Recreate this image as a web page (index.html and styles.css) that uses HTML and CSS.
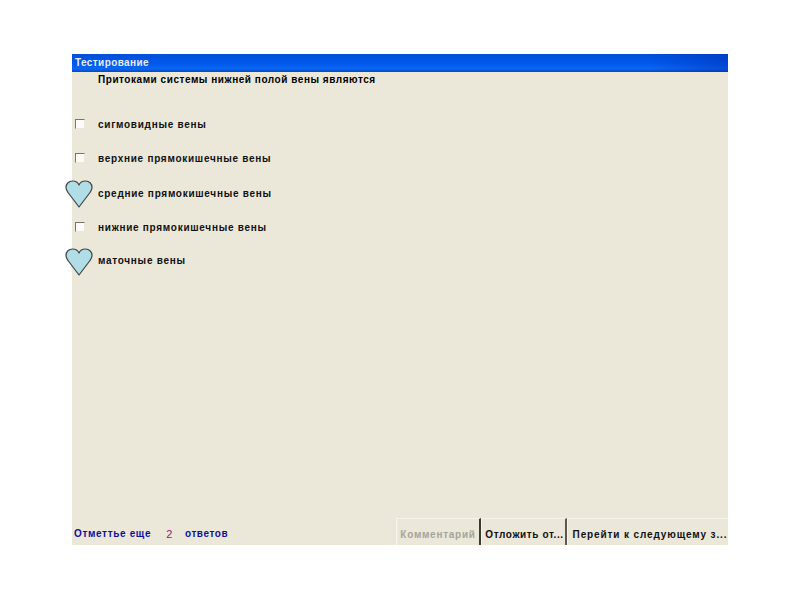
FILE: index.html
```html
<!DOCTYPE html>
<html lang="ru">
<head>
<meta charset="utf-8">
<title>Тестирование</title>
<link rel="stylesheet" href="styles.css">
</head>
<body>
<main class="window">
  <header class="titlebar">Тестирование</header>
  <div class="content">
    <p class="question">Притоками системы нижней полой вены являются</p>
    <ul class="options">
      <li class="option"><span class="check"></span><span>сигмовидные вены</span></li>
      <li class="option"><span class="check"></span><span>верхние прямокишечные вены</span></li>
      <li class="option option-marked option-down">
        <svg class="heart" viewBox="0 0 28 28"><path d="M14 27L4.500 14.500C2.500 12 1 10 1 7.500 1 3.500 4 1 7.500 1 10.500 1 13 2.500 14 5 15 2.500 17.500 1 20.500 1 24 1 27 3.500 27 7.500 27 10 25.500 12 23.500 14.500Z"/></svg>
        <span class="check-space"></span><span>средние прямокишечные вены</span>
      </li>
      <li class="option"><span class="check"></span><span>нижние прямокишечные вены</span></li>
      <li class="option option-marked option-up">
        <svg class="heart" viewBox="0 0 28 28"><path d="M14 27L4.500 14.500C2.500 12 1 10 1 7.500 1 3.500 4 1 7.500 1 10.500 1 13 2.500 14 5 15 2.500 17.500 1 20.500 1 24 1 27 3.500 27 7.500 27 10 25.500 12 23.500 14.500Z"/></svg>
        <span class="check-space"></span><span>маточные вены</span>
      </li>
    </ul>
  </div>
  <footer class="statusbar">
    <div class="status"><span class="status-lead">Отметтье еще</span><span class="count">2</span><span class="status-tail">ответов</span></div>
    <div class="buttons">
      <button class="btn btn-comment" disabled>Комментарий</button>
      <button class="btn btn-defer">Отложить от...</button>
      <button class="btn btn-next">Перейти к следующему з...</button>
    </div>
  </footer>
</main>
</body>
</html>
```
FILE: styles.css
```css
* { box-sizing: border-box; }
html, body { height: 100%; }
body {
  margin: 0;
  background: #fff;
  padding: 54px 72px;
  font-family: "Liberation Sans", Arial, sans-serif;
  font-size: 10px;
  font-weight: 700;
  letter-spacing: 0.72px;
  color: #111;
}
.window {
  width: 656px;
  height: 491px;
  background: #ebe8da;
  display: flex;
  flex-direction: column;
}
.titlebar {
  height: 18px;
  flex: none;
  padding-left: 3px;
  line-height: 17px;
  color: #e8eeff;
  letter-spacing: 0.4px;
  background:
    linear-gradient(90deg, rgba(0, 30, 160, 0) 88%, rgba(0, 30, 160, 0.35) 100%),
    linear-gradient(180deg, #0050d8 0%, #0058ea 50%, #0a66f4 82%, #0848b8 100%);
}
.content { flex: 1; }
.question {
  margin: 0;
  padding-left: 26px;
  height: 16px;
  line-height: 16px;
  letter-spacing: 0.54px;
  color: #000;
}
.options {
  list-style: none;
  margin: 19px 0 0;
  padding: 0;
}
.option {
  position: relative;
  height: 34px;
  display: flex;
  align-items: center;
  padding-left: 3px;
  gap: 13px;
  color: #111;
}
.option-down { margin-top: 1px; }
.option-up { margin-top: -1px; }
.check {
  width: 10px;
  height: 10px;
  flex: none;
  background: #fbfbf8;
  border-top: 1px solid #77776d;
  border-left: 1px solid #77776d;
  border-right: 1px solid #ebe8da;
  border-bottom: 1px solid #ebe8da;
}
.check-space { width: 10px; flex: none; }
.heart {
  position: absolute;
  left: -7px;
  top: 5px;
  width: 28px;
  height: 28px;
  fill: #b0dde6;
  stroke: #3c4648;
  stroke-width: 1.2;
  stroke-linejoin: round;
}
.option-down .heart { top: 4px; }
.statusbar {
  height: 27px;
  padding-top: 4px;
  flex: none;
  display: flex;
  justify-content: space-between;
  align-items: stretch;
}
.status {
  display: flex;
  align-items: center;
  padding-left: 2px;
  color: #1010a0;
}
.status-lead { letter-spacing: 0.65px; }
.count { color: #a01080; font-weight: 400; font-size: 11px; margin: 0 12px 0 15px; }
.status-tail { letter-spacing: 0.55px; }
.buttons { display: flex; margin-top: -4px; }
.btn {
  height: 27px;
  margin: 0;
  padding: 4px 0 0;
  border: 0;
  border-top: 1px solid #f6f4ea;
  border-left: 1px solid #f6f4ea;
  border-right: 2px solid #5a5a50;
  background: #ebe8da;
  font: inherit;
  letter-spacing: 0.72px;
  color: #111;
  text-align: center;
}
.btn-comment { width: 85px; color: #a5a59b; border-right-color: #3a3a30; }
.btn-defer { width: 86px; padding-left: 2px; letter-spacing: 0.6px; }
.btn-next { width: 161px; padding-left: 4px; border-right: 0; letter-spacing: 0.88px; }
```
